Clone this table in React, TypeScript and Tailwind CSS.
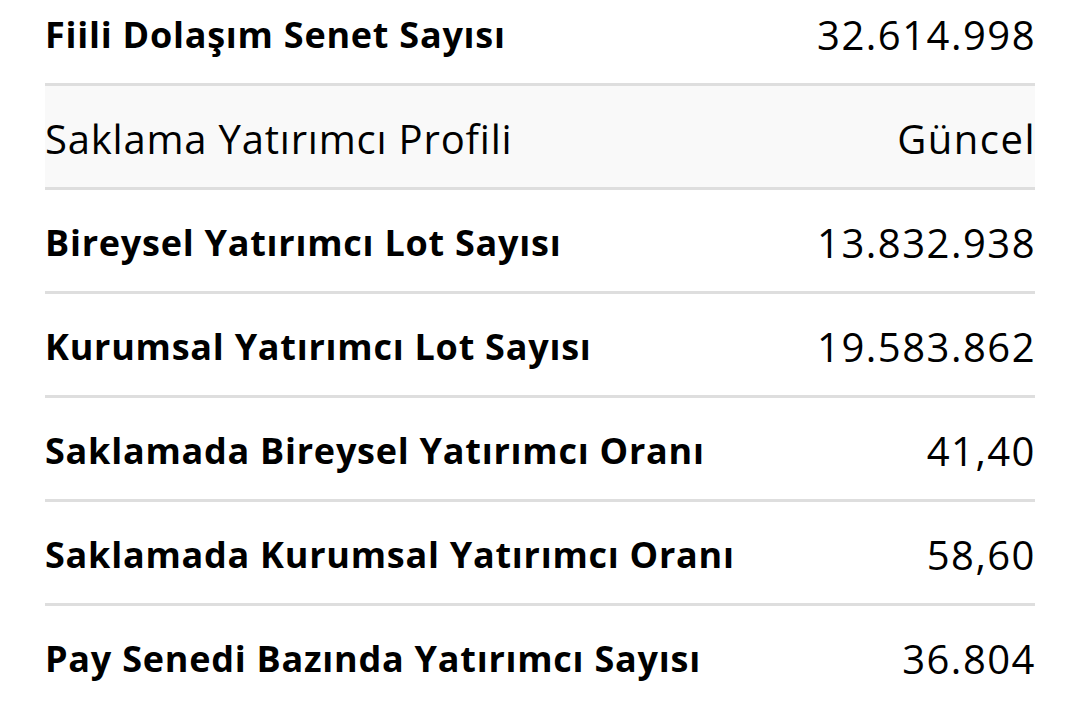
import React from 'react';

type Row = {
  label: string;
  value: string;
  header?: boolean;
};

const rows: Row[] = [
  { label: 'Fiili Dolaşım Senet Sayısı', value: '32.614.998' },
  { label: 'Saklama Yatırımcı Profili', value: 'Güncel', header: true },
  { label: 'Bireysel Yatırımcı Lot Sayısı', value: '13.832.938' },
  { label: 'Kurumsal Yatırımcı Lot Sayısı', value: '19.583.862' },
  { label: 'Saklamada Bireysel Yatırımcı Oranı', value: '41,40' },
  { label: 'Saklamada Kurumsal Yatırımcı Oranı', value: '58,60' },
  { label: 'Pay Senedi Bazında Yatırımcı Sayısı', value: '36.804' },
];

export default function App() {
  return (
    <div className="h-[705px] w-[1080px] overflow-hidden bg-white px-[45px] font-['Open_Sans',sans-serif] text-black">
      <div className="-mt-[18px]">
        {rows.map((row, i) => (
          <div
            key={i}
            className={`flex h-[104px] items-center justify-between border-b-[3px] border-[#dedede] pt-[5px] leading-none ${
              row.header ? 'bg-[#f9f9f9]' : ''
            }`}
          >
            {row.header ? (
              <span className="text-[40px] font-normal tracking-[0.8px]">{row.label}</span>
            ) : (
              <span className="text-[36px] font-bold tracking-[0.75px]">{row.label}</span>
            )}
            <span className="-mr-[1px] text-[40px] tracking-[1.5px]">{row.value}</span>
          </div>
        ))}
      </div>
    </div>
  );
}
